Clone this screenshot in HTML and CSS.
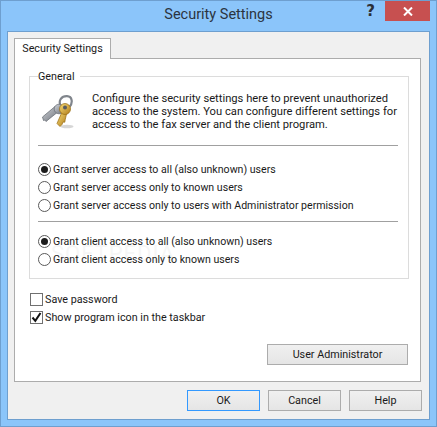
FILE: index.html
```html
<!DOCTYPE html>
<html lang="en">
<head>
<meta charset="utf-8">
<title>Security Settings</title>
<link rel="stylesheet" href="styles.css">
</head>
<body>
<div class="window">
  <header class="titlebar">
    <div class="title">Security Settings</div>
    <div class="help-glyph">?</div>
    <div class="close">
      <svg width="10" height="9" viewBox="0 0 10 9"><path d="M1 0.5 L9 8.5 M9 0.5 L1 8.5" stroke="#fff" stroke-width="2" fill="none"/></svg>
    </div>
  </header>
  <div class="client">
    <div class="tabstrip"><div class="tab">Security Settings</div></div>
    <div class="panel">
      <fieldset class="group">
        <legend class="legend">General</legend>
        <div class="intro">
          <svg class="keys" width="36" height="36" viewBox="0 0 36 36">
            <defs>
              <linearGradient id="gold" x1="0" y1="0" x2="1" y2="1"><stop offset="0" stop-color="#f7dc78"/><stop offset="1" stop-color="#b07c1a"/></linearGradient>
              <linearGradient id="steel" x1="0" y1="0" x2="1" y2="1"><stop offset="0" stop-color="#d2d5da"/><stop offset="1" stop-color="#6b7078"/></linearGradient>
            </defs>
            <ellipse cx="25" cy="31.500" rx="6.500" ry="1.800" fill="#999" opacity=".4"/>
            <path d="M19 12 C15.500 5 20 1 25 1.200 C30.500 1.500 31 8 27.500 12" fill="none" stroke="#80858c" stroke-width="2.200"/>
            <path d="M0.500 22 L13 11.500 L17 16 L4 26.500 L2.500 25 L1.500 25.500 Z" fill="url(#steel)" stroke="#5f646b" stroke-width=".7"/>
            <circle cx="17" cy="14" r="4.800" fill="url(#steel)" stroke="#676c74" stroke-width=".7"/>
            <path d="M20 17 L15 28.500 L18 31.500 L20 29.500 L21 27 L22.800 27.200 L23.200 24.800 L24.500 19" fill="url(#gold)" stroke="#96690f" stroke-width=".7"/>
            <circle cx="23" cy="14" r="5.500" fill="url(#gold)" stroke="#96690f" stroke-width=".7"/>
            <circle cx="23" cy="12.500" r="2" fill="#565a61"/>
          </svg>
          <p class="intro-text">Configure the security settings here to prevent unauthorized access to the system. You can configure different settings for access to the fax server and the client program.</p>
        </div>
        <hr class="rule">
        <ul class="options">
          <li class="option"><span class="radio checked"></span>Grant server access to all (also unknown) users</li>
          <li class="option"><span class="radio"></span>Grant server access only to known users</li>
          <li class="option"><span class="radio"></span>Grant server access only to users with Administrator permission</li>
        </ul>
        <hr class="rule rule-mid">
        <ul class="options">
          <li class="option"><span class="radio checked"></span>Grant client access to all (also unknown) users</li>
          <li class="option"><span class="radio"></span>Grant client access only to known users</li>
        </ul>
      </fieldset>
      <ul class="checks">
        <li class="check-row"><span class="check"></span>Save password</li>
        <li class="check-row"><span class="check">
          <svg width="11" height="11" viewBox="0 0 11 11"><path d="M1.500 5.500 L4.300 8.800 L9.500 1" fill="none" stroke="#111" stroke-width="2"/></svg>
        </span>Show program icon in the taskbar</li>
      </ul>
      <div class="panel-actions"><button class="btn btn-wide">User Administrator</button></div>
    </div>
    <footer class="footer">
      <button class="btn btn-default">OK</button>
      <button class="btn">Cancel</button>
      <button class="btn">Help</button>
    </footer>
  </div>
  <div class="watermark">SOFTPEDIA</div>
</div>
</body>
</html>
```
FILE: styles.css
```css
* { box-sizing: border-box; }
html, body { margin: 0; padding: 0; }
body {
  width: 437px;
  height: 427px;
  overflow: hidden;
  font-family: "Roboto", "Open Sans", sans-serif;
  font-size: 10.750px;
  color: #1a1a1a;
}
.window {
  position: relative;
  width: 437px;
  height: 427px;
  background: #8bc5fa;
  border: 1px solid #6e9fcf;
  padding: 0 6px 6px;
  display: flex;
  flex-direction: column;
}
.titlebar {
  position: relative;
  height: 30px;
  flex: none;
  display: flex;
  justify-content: center;
}
.title {
  font-size: 14.500px;
  line-height: 28px;
  color: #2b3440;
}
.help-glyph {
  position: absolute;
  right: 55px;
  top: 0;
  font: bold 15px/20px "DejaVu Sans", sans-serif;
  color: #2b3038;
}
.close {
  position: absolute;
  right: 0;
  top: 0;
  width: 45px;
  height: 20px;
  background: #c75050;
  display: flex;
  align-items: center;
  justify-content: center;
}
.client {
  flex: 1;
  background: #f0f0f0;
  border: 1px solid #6e9fcf;
  padding: 6px 8px 7px 6px;
  display: flex;
  flex-direction: column;
}
.tabstrip { display: flex; height: 20px; flex: none; }
.tab {
  width: 97px;
  height: 21px;
  background: #fff;
  border: 1px solid #acacac;
  border-bottom: 0;
  text-align: center;
  line-height: 19px;
  position: relative;
  z-index: 1;
}
.panel {
  height: 324px;
  flex: none;
  background: #fff;
  border: 1px solid #acacac;
  padding: 10px 11px 0 14px;
}
.group {
  margin: 0;
  padding: 0 10px 0 8px;
  height: 210px;
  border: 1px solid #dcdcdc;
}
.legend { margin-left: 0; line-height: 16px; height: 14px; padding: 0 5px 0 0; }
.intro { display: flex; height: 62px; padding-top: 9px; }
.keys { margin: 3px 0 0 4px; flex: none; }
.intro-text { margin: 0 0 0 14px; font-size: 11.200px; line-height: 13px; width: 306px; }
.rule { margin: 0; border: 0; height: 1px; background: #a0a0a0; }
.rule-mid { margin-top: 7px; }
.options { list-style: none; margin: 0; padding: 14px 0 0; font-size: 10.600px; }
.rule-mid + .options { padding-top: 10px; }
.option { display: flex; align-items: center; height: 18px; white-space: nowrap; }
.radio {
  width: 13px;
  height: 13px;
  border-radius: 50%;
  border: 1px solid #5a5a5a;
  background: #fff;
  margin-right: 2px;
  flex: none;
  display: flex;
  align-items: center;
  justify-content: center;
}
.radio.checked::after {
  content: "";
  width: 7px;
  height: 7px;
  border-radius: 50%;
  background: #1c1c1c;
}
.checks { list-style: none; margin: 0; padding: 11px 0 0 1px; }
.check-row { display: flex; align-items: center; height: 18px; white-space: nowrap; }
.check {
  width: 13px;
  height: 13px;
  border: 1px solid #707070;
  background: #fff;
  margin-right: 2px;
  flex: none;
  display: flex;
  align-items: center;
  justify-content: center;
}
.panel-actions { display: flex; justify-content: flex-end; margin: 18px 1px 0 0; }
.btn {
  width: 73px;
  height: 21px;
  padding: 0;
  font: inherit;
  color: #1a1a1a;
  background: linear-gradient(#f0f0f0, #e5e5e5);
  border: 1px solid #acacac;
}
.btn-wide { width: 141px; }
.btn-default { border-color: #3399ff; }
.footer { display: flex; justify-content: flex-end; gap: 8px; margin: 8px -1px 0 0; }
.watermark {
  position: absolute;
  left: 50px;
  top: 240px;
  font-size: 22px;
  letter-spacing: 1px;
  color: #000;
  opacity: 0.03;
}
```
